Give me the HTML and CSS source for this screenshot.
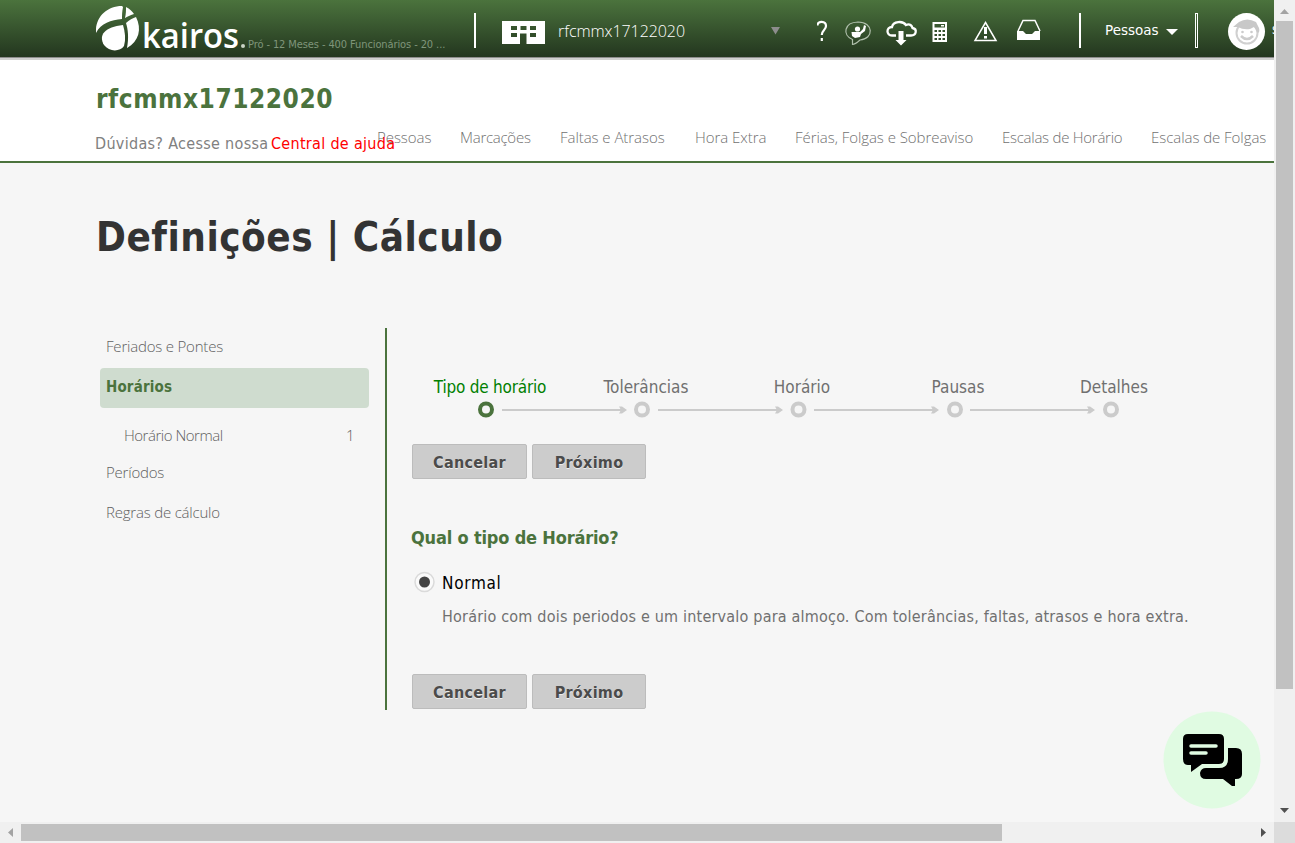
FILE: index.html
```html
<!DOCTYPE html>
<html lang="pt">
<head>
<meta charset="utf-8">
<title>Kairos</title>
<link rel="stylesheet" href="styles.css">
</head>
<body>
<div class="window">
<div class="viewport">
  <header class="topbar">
    <svg class="logo" width="152" height="50" viewBox="0 0 152 50">
      <g fill="#fff">
        <path d="M0 27C-1 12 10 0 26 0L27 1C26 6 26 9 26 13C15 14 5 17 0 27Z"/>
        <path d="M30 1C34 3 36 5 38 8C35 9 32 10 29 12C30 8 30 4 30 1Z"/>
        <path d="M40 11C46 23 43 35 31 42C33 32 32 23 30 17C33 14 37 12 40 11Z"/>
        <path d="M27 19C29 26 30 33 28 40C24 46 13 46 8 39C2 29 9 21 27 19Z"/>
      </g>
      <text class="logo-text" x="46" y="42" textLength="97" lengthAdjust="spacingAndGlyphs">kairos</text>
      <circle cx="147" cy="40" r="2" fill="#c9d3c6"/>
    </svg>
    <span class="plan">Pró - 12 Meses - 400 Funcionários - 20 ...</span>
    <i class="sep"></i>
    <svg class="building" width="43" height="23" viewBox="0 0 43 23"><path fill="#fff" fill-rule="evenodd" d="M0 0H43V23H24.500V12.500H18V23H0ZM9 5V9H15V5ZM18.500 5V9H24.500V5ZM28 5V9H34V5ZM9 12V16H15V12ZM28 12V16H34V12Z"/></svg>
    <span class="company">rfcmmx17122020</span>
    <svg class="caret" width="9" height="8" viewBox="0 0 9 8"><path fill="#8d8d8d" d="M0 0H9L4.500 7.500Z"/></svg>
    <svg class="tools" width="230" height="30" viewBox="0 0 230 30" fill="none" stroke="#fff">
      <path stroke-width="2.200" d="M0.500 7.500C0.500 2.500 9 2.500 9 8C9 12 4.800 12 4.800 17M4.800 20V23"/>
      <path stroke="#b0bfac" stroke-width="1.200" d="M35.500 21.500C25 17 27 4.500 41 4C57 4 57 21 43 22Q38 26.500 35.500 26.500Z"/>
      <circle cx="40.500" cy="11" r="2.600" fill="#fff" stroke="none"/>
      <path fill="#fff" stroke="none" d="M34.500 14H43L46 11L47 7L49 8L48 13L44 16L43 19L38 20L35 18Z"/>
      <path stroke-width="2.300" d="M79 17.500H75C69 17.500 69 9 75 9C76 3 86 2.500 89 7C93 5 95 8 95.500 10C100.500 11 99.500 17.500 94 17.500H89"/>
      <path fill="#fff" stroke="none" d="M81.500 13H86.500V22H89.500L84 27.500L78.500 22H81.500Z"/>
      <path fill="#fff" stroke="none" fill-rule="evenodd" d="M115.500 4H130V24H115.500ZM117.500 6V9.500H128V6ZM124 7H127V8.500H124ZM117.500 12V14H120V12ZM121.500 12V14H124V12ZM125.500 12V14H128V12ZM117.500 16V18H120V16ZM121.500 16V18H124V16ZM125.500 16V18H128V16ZM117.500 20V22H120V20ZM121.500 20V22H124V20ZM125.500 20V22H128V20Z"/>
      <path stroke-width="1.500" d="M168.500 4.500L179 22.500H158Z"/><path stroke-width="3" d="M168.500 9V16M168.500 18V20.500"/>
      <path stroke-width="1.500" d="M201 13L206 2.500H218L223 13"/>
      <path fill="#fff" stroke="none" d="M200 13H206L209 16H215L218 13H223V22H200Z"/>
    </svg>
    <i class="sep sep-b"></i>
    <span class="user">Pessoas</span>
    <svg class="usercaret" width="12" height="6" viewBox="0 0 12 6"><path fill="#fff" d="M0 0H12L6 6Z"/></svg>
    <i class="sep-box"></i>
    <svg class="avatar" width="38" height="38" viewBox="0 0 38 38"><circle cx="18.500" cy="18.500" r="18.500" fill="#fff"/><circle cx="19" cy="20" r="10.500" fill="none" stroke="#d0d0d0" stroke-width="2"/><path fill="#c8c8c8" d="M5 14L11 9Q19 4 28 9L31 15Q32 19 30 20L26 14L22 16Q15 17 10 14Z"/><path d="M13 23Q19 29 25 23" fill="none" stroke="#ccc" stroke-width="2.500"/><circle cx="14.500" cy="19" r="1.300" fill="#ccc"/><circle cx="23.500" cy="19" r="1.300" fill="#ccc"/></svg>
    <span class="username">s</span>
  </header>
  <div class="brandbar">
    <div class="brand"><div class="brand-name">rfcmmx17122020</div>
    <div class="help"><span>Dúvidas? Acesse nossa</span><a>Central de ajuda</a></div></div>
    <nav class="menu"><a>Pessoas</a><a>Marcações</a><a>Faltas e Atrasos</a><a>Hora Extra</a><a>Férias, Folgas e Sobreaviso</a><a>Escalas de Horário</a><a>Escalas de Folgas</a></nav>
  </div>
  <main>
    <h1>Definições | Cálculo</h1>
    <div class="columns">
      <aside class="side">
        <div class="item">Feriados e Pontes</div>
        <div class="item active">Horários</div>
        <div class="subitem"><span>Horário Normal</span><b>1</b></div>
        <div class="item">Períodos</div>
        <div class="item">Regras de cálculo</div>
      </aside>
      <section class="content">
        <ol class="steps">
          <li class="on">Tipo de horário</li><li>Tolerâncias</li><li>Horário</li><li>Pausas</li><li>Detalhes</li>
        </ol>
        <svg class="track" width="730" height="18" viewBox="0 0 730 18" fill="none" stroke="#cbcbcb">
          <g stroke-width="2"><path d="M90 9H211M246 9H367M402 9H523M558 9H679"/></g>
          <g fill="#cbcbcb" stroke="none"><path id="arrow" d="M207 5.500H210L215 9L210 12.500H207L209 9Z"/><use href="#arrow" x="156"/><use href="#arrow" x="312"/><use href="#arrow" x="468"/></g>
          <g stroke-width="4"><circle cx="74" cy="8.500" r="6" stroke="#4b733d"/><circle cx="230" cy="8.500" r="6"/><circle cx="386.500" cy="8.500" r="6"/><circle cx="543" cy="8.500" r="6"/><circle cx="699" cy="8.500" r="6"/></g>
        </svg>
        <div class="buttons"><button class="cancel">Cancelar</button><button>Próximo</button></div>
        <h2>Qual o tipo de Horário?</h2>
        <div class="option"><svg width="22" height="22" viewBox="0 0 22 22"><circle cx="10.500" cy="11" r="9.500" fill="#fafafa" stroke="#dadada" stroke-width="1.500"/><circle cx="10.500" cy="11" r="5.500" fill="#444"/></svg><span>Normal</span></div>
        <p>Horário com dois periodos e um intervalo para almoço. Com tolerâncias, faltas, atrasos e hora extra.</p>
        <div class="buttons last"><button class="cancel">Cancelar</button><button>Próximo</button></div>
      </section>
    </div>
  </main>
</div>
<svg class="chat" width="98" height="98" viewBox="0 0 98 98"><circle cx="49" cy="49" r="48.500" fill="#e0fbe2"/>
  <path d="M25 23H56Q61 23 61 28V48Q61 53 56 53H39L28 61V54H25Q20 54 20 48V28Q20 23 25 23Z"/><path d="M65 37H73Q79 37 79 43V63Q79 68 73 68H72V75H69L60 68H43Q37 68 37 62Q38 57 43 57H56Q65 57 65 48Z"/><path d="M28 35H53M28 42H43" stroke="#e0fbe2" stroke-width="3.500" stroke-linecap="round"/></svg>
<div class="vscroll"><svg width="21" height="21"><path fill="#a3a3a3" d="M6 14H15L10.500 9Z"/></svg><i></i><svg width="21" height="21"><path fill="#505050" d="M6 7H15L10.500 12Z"/></svg></div>
<div class="hscroll"><svg width="21" height="21"><path fill="#a3a3a3" d="M13 6V15L8 10.500Z"/></svg><i></i><svg width="21" height="21"><path fill="#505050" d="M8 6V15L13 10.500Z"/></svg></div>
<div class="corner"></div>
</div>
</body>
</html>
```
FILE: styles.css
```css
* { box-sizing: border-box; }
body { margin: 0; overflow: hidden; font-family: "DejaVu Sans Condensed", "Noto Sans", sans-serif; white-space: nowrap; }
.window { position: relative; display: grid; grid-template: 822px 21px / 1274px 21px; width: 1295px; height: 843px; background: #f6f6f6; }
.viewport { overflow: hidden; height: 822px; display: flex; flex-direction: column; }
svg { display: block; flex: none; }
.topbar { display: flex; flex: none; height: 60px; background: linear-gradient(#4b733d, #23361f 57px, #8d8d8d 57px, #8d8d8d 58px, #d0d0d0 58px); align-items: flex-start; padding-left: 96px; }
.topbar > * { flex: none; }
.logo { margin-top: 6px; }
.logo-text { font: 600 35px "Open Sans", sans-serif; fill: #fff; }
.plan { width: 226px; font: 11px/14px "DejaVu Sans Condensed", sans-serif; letter-spacing: -0.1px; color: #7f957a; margin-top: 38px; }
.sep { width: 2px; height: 35px; background: #fff; margin-top: 13px; }
.building { margin: 21px 13px 0 26px; }
.company { width: 213px; margin-top: 20px; font: 300 16px/22px "Open Sans", sans-serif; letter-spacing: -0.07px; color: #fff; }
.caret { margin-top: 27px; }
.tools { margin: 18px 0 0 37px; }
.sep-b { margin-left: 32px; }
.user { width: 61px; margin: 20px 0 0 24px; font: 13.500px/20px "DejaVu Sans", sans-serif; color: #fff; }
.usercaret { margin-top: 29px; }
.sep-box { width: 3px; height: 35px; border: 1px solid #fff; margin: 13px 0 0 17px; }
.avatar { margin: 13px 6px 0 30px; }
.username { color: #fff; font-size: 14px; margin-top: 21px; }
.brandbar { display: flex; flex: none; height: 103px; background: #fff; border-bottom: 2px solid #4b733d; padding-left: 95px; }
.brand { position: relative; z-index: 1; width: 282px; flex: none; padding: 23px 0 0; }
.brand-name { font-size: 26px; line-height: 32px; font-weight: bold; letter-spacing: 0.53px; color: #4b733d; padding-left: 1px; }
.help { display: flex; gap: 2.500px; margin-top: 18px; font-size: 16px; line-height: 22px; letter-spacing: 0.31px; color: #808080; }
.help a { color: #f00; }
.menu { display: grid; grid-template-columns: 54px 71px 106px 71px 178px 120px 115px; gap: 29px; margin-top: 66px; font: 300 15px/22px "Open Sans", sans-serif; letter-spacing: -0.05px; color: #707070; }
.menu a:nth-child(2), .menu a:nth-child(6) { letter-spacing: -0.26px; }
h1 { margin: 49px 0 0 96px; font-size: 40px; line-height: 50px; letter-spacing: 0.5px; color: #333; }
.columns { display: flex; margin: 66px 0 0 100px; }
.side { width: 269px; flex: none; font: 300 15px/38px "Open Sans", sans-serif; letter-spacing: -0.2px; color: #606060; }
.item { height: 40px; padding-left: 6px; }
.item:first-child { line-height: 36px; }
.item.active { font: bold 15px/38px "DejaVu Sans Condensed", sans-serif; letter-spacing: 0.15px; color: #4b733d; background: #cfdccf; border-radius: 4px; }
.subitem { display: flex; justify-content: space-between; height: 45px; padding: 8px 15px 0 24px; letter-spacing: -0.48px; }
.subitem b { font-weight: 300; }
.content { flex: none; width: 860px; height: 382px; margin-left: 16px; border-left: 2px solid #4b733d; padding-left: 25px; }
.steps { display: flex; list-style: none; margin: 0; padding: 48px 0 0; font-size: 17px; line-height: 22px; color: #707070; }
.steps li { width: 156px; flex: none; text-align: center; }
.steps .on { color: #008000; letter-spacing: -0.22px; }
.track { margin-top: 3px; }
.buttons { display: flex; gap: 5px; margin-top: 25px; }
button { width: 114px; height: 35px; padding: 2px 0 0; border: 1px solid #bcbcbc; border-radius: 2px; background: #ccc; color: #4b4b4b; font: bold 16px/26px "DejaVu Sans Condensed", sans-serif; letter-spacing: 0.3px; text-shadow: 0 1px #eee; }
.cancel { width: 115px; }
h2 { margin: 46px 0 0 -1px; font-size: 18px; line-height: 26px; letter-spacing: -0.18px; color: #4b733d; }
.option { display: flex; gap: 6px; margin: 20px 0 0 2px; font-size: 17px; line-height: 24px; letter-spacing: 0.7px; }
p { margin: 10px 0 0 30px; font-size: 16px; line-height: 24px; letter-spacing: 0.2px; color: #707070; }
.last { margin-top: 45px; }
.chat { position: absolute; left: 1163px; top: 711px; }
.vscroll { grid-area: 1 / 2; display: flex; flex-direction: column; background: #f0f0f0; }
.vscroll i { width: 17px; height: 668px; margin: 0 2px 112px; background: #c1c1c1; }
.hscroll { grid-area: 2 / 1; display: flex; background: #f0f0f0; }
.hscroll i { width: 981px; height: 17px; margin: 2px 251px 0 0; background: #c1c1c1; }
.corner { grid-area: 2 / 2; background: #dcdcdc; }
```
